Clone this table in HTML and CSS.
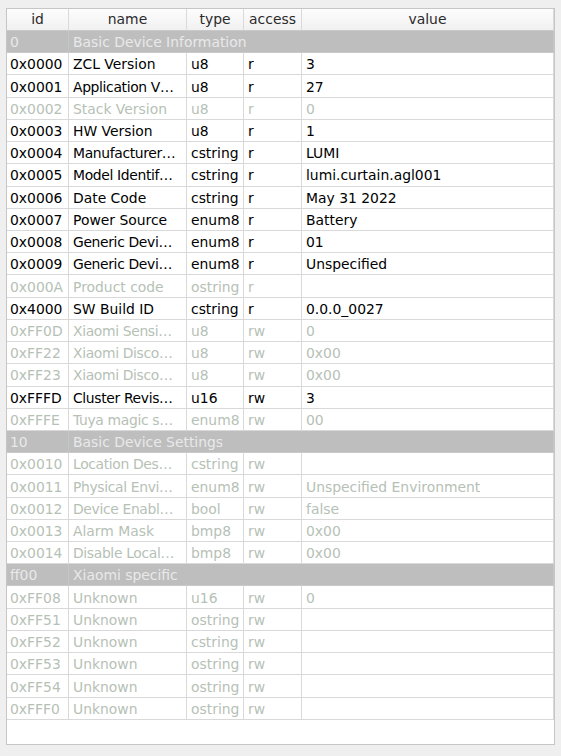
FILE: index.html
```html
<!DOCTYPE html>
<html>
<head>
<meta charset="utf-8">
<link rel="stylesheet" href="styles.css">
</head>
<body>
<div class="frame">
  <div class="row head">
    <div class="c">id</div><div class="c">name</div><div class="c">type</div><div class="c">access</div><div class="c">value</div>
  </div>
  <div class="row group"><div class="c">0</div><div class="c span">Basic Device Information</div></div>
  <div class="row"><div class="c">0x0000</div><div class="c">ZCL Version</div><div class="c">u8</div><div class="c">r</div><div class="c">3</div></div>
  <div class="row"><div class="c">0x0001</div><div class="c el">Application V…</div><div class="c">u8</div><div class="c">r</div><div class="c">27</div></div>
  <div class="row dis"><div class="c">0x0002</div><div class="c">Stack Version</div><div class="c">u8</div><div class="c">r</div><div class="c">0</div></div>
  <div class="row"><div class="c">0x0003</div><div class="c">HW Version</div><div class="c">u8</div><div class="c">r</div><div class="c">1</div></div>
  <div class="row"><div class="c">0x0004</div><div class="c el">Manufacturer…</div><div class="c">cstring</div><div class="c">r</div><div class="c">LUMI</div></div>
  <div class="row"><div class="c">0x0005</div><div class="c el">Model Identif…</div><div class="c">cstring</div><div class="c">r</div><div class="c">lumi.curtain.agl001</div></div>
  <div class="row"><div class="c">0x0006</div><div class="c">Date Code</div><div class="c">cstring</div><div class="c">r</div><div class="c">May 31 2022</div></div>
  <div class="row"><div class="c">0x0007</div><div class="c">Power Source</div><div class="c">enum8</div><div class="c">r</div><div class="c">Battery</div></div>
  <div class="row"><div class="c">0x0008</div><div class="c el">Generic Devi…</div><div class="c">enum8</div><div class="c">r</div><div class="c">01</div></div>
  <div class="row"><div class="c">0x0009</div><div class="c el">Generic Devi…</div><div class="c">enum8</div><div class="c">r</div><div class="c">Unspecified</div></div>
  <div class="row dis"><div class="c">0x000A</div><div class="c">Product code</div><div class="c">ostring</div><div class="c">r</div><div class="c"></div></div>
  <div class="row"><div class="c">0x4000</div><div class="c">SW Build ID</div><div class="c">cstring</div><div class="c">r</div><div class="c">0.0.0_0027</div></div>
  <div class="row dis"><div class="c">0xFF0D</div><div class="c el">Xiaomi Sensi…</div><div class="c">u8</div><div class="c">rw</div><div class="c">0</div></div>
  <div class="row dis"><div class="c">0xFF22</div><div class="c el">Xiaomi Disco…</div><div class="c">u8</div><div class="c">rw</div><div class="c">0x00</div></div>
  <div class="row dis"><div class="c">0xFF23</div><div class="c el">Xiaomi Disco…</div><div class="c">u8</div><div class="c">rw</div><div class="c">0x00</div></div>
  <div class="row"><div class="c">0xFFFD</div><div class="c el">Cluster Revis…</div><div class="c">u16</div><div class="c">rw</div><div class="c">3</div></div>
  <div class="row dis"><div class="c">0xFFFE</div><div class="c el">Tuya magic s…</div><div class="c">enum8</div><div class="c">rw</div><div class="c">00</div></div>
  <div class="row group"><div class="c">10</div><div class="c span">Basic Device Settings</div></div>
  <div class="row dis"><div class="c">0x0010</div><div class="c el">Location Des…</div><div class="c">cstring</div><div class="c">rw</div><div class="c"></div></div>
  <div class="row dis"><div class="c">0x0011</div><div class="c el">Physical Envi…</div><div class="c">enum8</div><div class="c">rw</div><div class="c">Unspecified Environment</div></div>
  <div class="row dis"><div class="c">0x0012</div><div class="c el">Device Enabl…</div><div class="c">bool</div><div class="c">rw</div><div class="c">false</div></div>
  <div class="row dis"><div class="c">0x0013</div><div class="c">Alarm Mask</div><div class="c">bmp8</div><div class="c">rw</div><div class="c">0x00</div></div>
  <div class="row dis"><div class="c">0x0014</div><div class="c el">Disable Local…</div><div class="c">bmp8</div><div class="c">rw</div><div class="c">0x00</div></div>
  <div class="row group"><div class="c">ff00</div><div class="c span">Xiaomi specific</div></div>
  <div class="row dis"><div class="c">0xFF08</div><div class="c">Unknown</div><div class="c">u16</div><div class="c">rw</div><div class="c">0</div></div>
  <div class="row dis"><div class="c">0xFF51</div><div class="c">Unknown</div><div class="c">ostring</div><div class="c">rw</div><div class="c"></div></div>
  <div class="row dis"><div class="c">0xFF52</div><div class="c">Unknown</div><div class="c">cstring</div><div class="c">rw</div><div class="c"></div></div>
  <div class="row dis"><div class="c">0xFF53</div><div class="c">Unknown</div><div class="c">ostring</div><div class="c">rw</div><div class="c"></div></div>
  <div class="row dis"><div class="c">0xFF54</div><div class="c">Unknown</div><div class="c">ostring</div><div class="c">rw</div><div class="c"></div></div>
  <div class="row dis"><div class="c">0xFFF0</div><div class="c">Unknown</div><div class="c">ostring</div><div class="c">rw</div><div class="c"></div></div>
</div>
</body>
</html>
```

FILE: styles.css
```css
html, body {
  margin: 0;
  padding: 0;
  background: #efefef;
}
body {
  padding: 8px 0 0 6px;
  font-family: "DejaVu Sans", sans-serif;
  font-size: 13.9px;
  color: #000;
}
.frame {
  width: 547px;
  height: 735px;
  border: 1px solid #c6c6c6;
  background: #fff;
  overflow: hidden;
}
.row {
  display: grid;
  grid-template-columns: 62px 118px 57px 58px 252px;
  height: 22.23px;
  box-sizing: border-box;
}
.c {
  box-sizing: border-box;
  border-right: 1px solid #d9d9d9;
  border-bottom: 1px solid #d9d9d9;
  padding-left: 3px;
  padding-top: 3px;
  white-space: nowrap;
  overflow: hidden;
  display: flex;
  align-items: center;
  line-height: 1;
}
.row .c:nth-child(n+2) {
  padding-left: 4px;
}
.row .el {
  letter-spacing: -0.35px;
}
.head {
  height: 22px;
  background: linear-gradient(#fefdfe, #f1f0f1);
}
.head .c {
  justify-content: center;
  padding-left: 0 !important;
  padding-top: 1px;
  color: #2a2a2a;
  border-right-color: #dadada;
  border-bottom-color: #c9c9c9;
}
.group {
  background: #bebebe;
  color: #e9e9e9;
}
.group .c {
  border-bottom-color: #c9c9c9;
  border-right-color: #c6c6c6;
}
.group .span {
  grid-column: 2 / 6;
}
.dis {
  color: #b6c1b6;
}
```
